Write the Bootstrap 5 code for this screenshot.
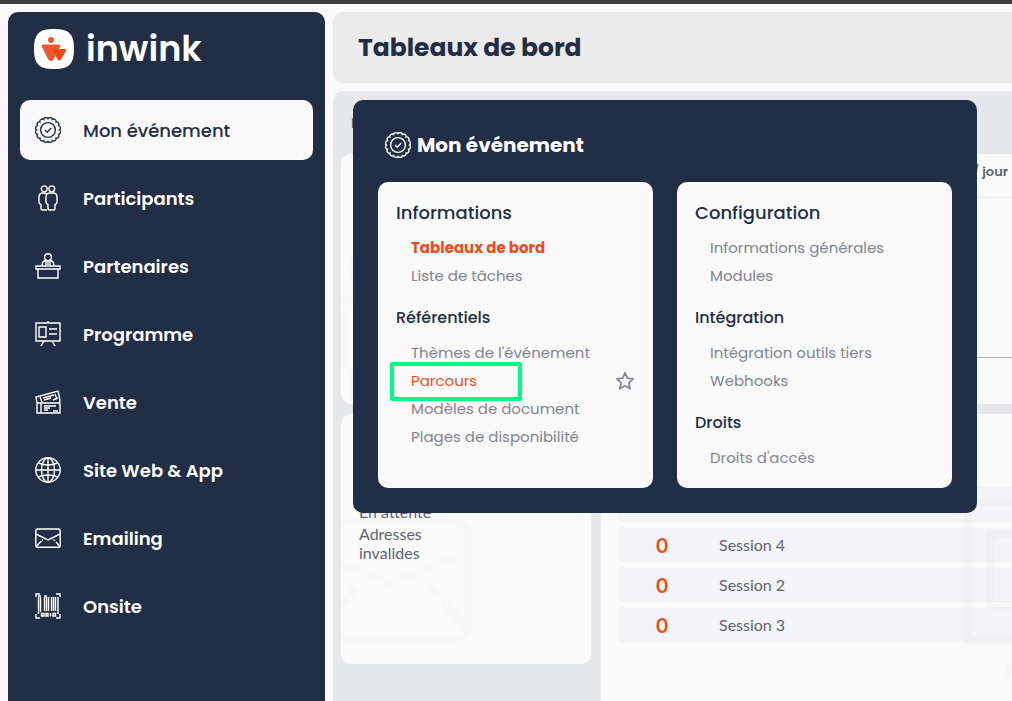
<!DOCTYPE html>
<html lang="fr">
<head>
<meta charset="utf-8">
<meta name="viewport" content="width=device-width, initial-scale=1">
<title>inwink – Tableaux de bord</title>
<link href="https://cdn.jsdelivr.net/npm/bootstrap@5.3.0/dist/css/bootstrap.min.css" rel="stylesheet">
<style>
:root { --navy: #222e45; --paper: #fafafa; --orange: #e94e1f; --mist: #e6e7eb; --radius: 10px; }
body { background: var(--paper); color: #5f6470; font-family: Lato, "Open Sans", sans-serif; font-size: 16px; }
.app { border-top: 4px solid #3d3c3c; }
.sidebar { flex: 0 0 317px; background: var(--navy); border-radius: var(--radius) var(--radius) 0 0; font-family: Poppins, Inter, sans-serif; }
.brand { height: 74px; padding: 0 26px; gap: 12px; color: #fff; font-size: 35px; font-weight: 600; line-height: 40px; }
.side-nav { padding: 14px 12px; gap: 8px; }
.side-nav .nav-link { height: 60px; padding: 0 15px; gap: 22px; color: #fff; font-size: 18px; font-weight: 600; border-radius: var(--radius); }
.side-nav .nav-link.active { background: var(--paper); color: var(--navy); font-weight: 500; }
.line-icon { width: 26px; height: 26px; flex: none; fill: none; stroke: currentColor; stroke-width: 1.4; }
.page-head { height: 71px; padding: 0 25px; background: #ebebeb; border-radius: var(--radius) 0 0 var(--radius); }
.page-head h1 { font: 700 25px/32px Poppins, Inter, sans-serif; color: var(--navy); }
.content { min-width: 0; }
.board { background: var(--mist); border-radius: var(--radius) 0 0 0; padding-left: 8px; }
.board-title { height: 63px; padding: 20px 10px; font: 600 14px/24px Poppins, Inter, sans-serif; }
.tiles { display: grid; grid-template-columns: 250px 1fr; grid-template-rows: 250px 1fr; gap: 10px; }
.tile { background: var(--paper); border-radius: var(--radius); position: relative; overflow: hidden; }
.tile-wide { border-radius: 0; }
.tile-tall { height: 250px; }
.watermark { position: absolute; fill: none; stroke: #f7f7f7; stroke-width: 7; }
.wm-person { left: 0; top: 90px; }
.wm-mail { left: -30px; top: 105px; }
.wm-screen { right: 0; top: 85px; stroke: #1e2840; stroke-opacity: .02; stroke-width: 8; }
.chart-title { height: 44px; padding: 6px 4px; border-bottom: 1px solid #ebebed; font: 600 13px/24px Poppins, Inter, sans-serif; }
.chart-area { height: 160px; border-bottom: 1px solid #adadad; }
.stats { padding: 88px 18px 0; line-height: 19px; max-width: 130px; position: relative; }
.stats dt { font-weight: 400; margin-bottom: 3px; }
.sessions { border-collapse: separate; border-spacing: 0 5px; margin: 68px 0 0 18px; width: calc(100% - 18px); }
.sessions td { height: 35px; padding: 0; background: #f4f4f7; line-height: 20px; vertical-align: middle; }
.sessions .count { width: 86px; text-align: center; color: var(--orange); font-size: 21px; font-weight: 700; }
.sessions .label { padding-left: 14px; }
.mega { position: absolute; left: 353px; top: 100px; width: 624px; padding: 25px; background: var(--navy); border-radius: var(--radius); font-family: Poppins, Inter, sans-serif; z-index: 10; }
.mega-title { height: 57px; padding: 7px 7px 0; gap: 6px; color: #fff; }
.mega-title h2 { font-size: 20px; line-height: 26px; font-weight: 700; }
.mega-cols { display: grid; grid-template-columns: 1fr 1fr; gap: 24px; }
.panel { background: var(--paper); border-radius: var(--radius); padding: 17px 18px 16px; }
.panel h3 { font-size: 16px; line-height: 28px; font-weight: 500; color: var(--navy); margin: 14px 0 7px; }
.panel h3:first-child { font-size: 18px; margin-top: 0; }
.panel li { padding-left: 15px; line-height: 28px; font-size: 15px; position: relative; }
.panel a { color: #80848f; text-decoration: none; }
.panel a.current { color: var(--orange); font-weight: 700; }
.panel a.hovered { color: var(--orange); }
.star { color: #868a95; line-height: 1; }
.marker { position: absolute; left: -6px; top: -5px; width: 132px; height: 39px; border: 4px solid #00fb84; border-radius: 2px; pointer-events: none; }
</style>
</head>
<body>
<div class="app d-flex vh-100 overflow-hidden position-relative ps-2 pt-2 gap-2">
  <aside class="sidebar">
    <div class="brand d-flex align-items-center">
      <svg width="40" height="40" viewBox="0 0 40 40" aria-hidden="true"><path fill="#fff" d="M20 0C35 0 40 5 40 20S35 40 20 40 0 35 0 20 5 0 20 0Z"/><circle cx="17" cy="11" r="3" fill="#ea5a32"/><path fill="#ea5a32" d="M9.500 15.500h15q2.500 0 1.500 2.500l-6 12q-1 2-3 2t-3-2L8 18q-1-2.500 1.500-2.500Z"/><path fill="#ea4b1c" d="M20.500 20h10q2.500 0 1.500 2l-5 8.500q-1.500 2-3.500 0l-4.500-8.500q-1-2 1-2Z"/></svg>
      <span>inwink</span>
    </div>
    <nav class="side-nav nav flex-column flex-nowrap">
      <a class="nav-link active d-flex align-items-center" href="#"><svg class="line-icon" viewBox="0 0 26 26"><use href="#seal"/></svg>Mon événement</a>
      <a class="nav-link d-flex align-items-center" href="#"><svg class="line-icon" viewBox="0 0 26 26"><circle cx="9.200" cy="3.800" r="2.900"/><circle cx="16.800" cy="3.800" r="2.900"/><path d="M12 8.800q-1.500-.8-4-.8-4 0-4 4v5q0 2 2 2.500v4q0 1.500 2 1.500h4M18 8h-3q-4 0-4 4v5q0 2 2 2.500v4q0 1.500 2 1.500h3q2 0 2-1.500v-4q2-.5 2-2.500v-5q0-4-4-4Z"/></svg>Participants</a>
      <a class="nav-link d-flex align-items-center" href="#"><svg class="line-icon" viewBox="0 0 26 26"><circle cx="13" cy="4.200" r="3.400"/><path d="M7 13q0-5 4-5.500M19 13q0-5-4-5.500M11 7.500v5M15 7.500v5M13 8v4M1 13h24v3H1ZM3 16v9h20v-9"/></svg>Partenaires</a>
      <a class="nav-link d-flex align-items-center" href="#"><svg class="line-icon" viewBox="0 0 26 26"><path d="M1 2h24v18H1ZM4 6h7v10H4ZM14 8h8M14 13h8M13 0v2M9 20l-3 5M17 20l3 5"/></svg>Programme</a>
      <a class="nav-link d-flex align-items-center" href="#"><svg class="line-icon" viewBox="0 0 26 26"><path d="M2 14h23v10H2ZM6 14v10M9 17h12M9 19h6M9 21h4M18 22h5M2 14L1 8l22-6 1 4 1 6-1 2M5 8l2 5M8 9l11-3M9 11l7-2M18 11l5-2M20 5l2 5"/></svg>Vente</a>
      <a class="nav-link d-flex align-items-center" href="#"><svg class="line-icon" viewBox="0 0 26 26"><circle cx="13" cy="13" r="12.200"/><ellipse cx="13" cy="13" rx="6.500" ry="12.200"/><path d="M13 1v24M1 13h24M3.500 6q9.500 4 19 0M3.500 20q9.500-4 19 0"/></svg>Site Web &amp; App</a>
      <a class="nav-link d-flex align-items-center" href="#"><svg class="line-icon" viewBox="0 0 26 26"><rect x=".8" y="4" width="24.400" height="18.200" rx="1.800"/><path d="M1 9l12 6 12-6M1.500 21l5-5M7 15.500l1-1M24.500 21l-3.500-4M20 16l-1.500-1.500"/></svg>Emailing</a>
      <a class="nav-link d-flex align-items-center" href="#"><svg class="line-icon" viewBox="0 0 26 26"><path d="M5 1H1v3M21 1h4v3M1 21v4h4M25 21v4h-4M3.500 4v17M5.500 4v15M9.500 4v14M11.500 4v14M13.500 4v14M16.500 4v14M18.500 4v14M20.500 4v14M23 4v17M3 3h3M9 3h3M6.500 20.500h2.500v2.500H6.500ZM11 20.500h2v2.500h-2ZM15.500 20v3.500M18 20.500h2.500v2.500H18Z"/></svg>Onsite</a>
    </nav>
  </aside>

  <main class="content flex-grow-1 d-flex flex-column gap-2">
    <header class="page-head d-flex align-items-center"><h1 class="m-0">Tableaux de bord</h1></header>
    <section class="board flex-grow-1 d-flex flex-column">
      <div class="board-title">I</div>
      <div class="tiles flex-grow-1">
        <div class="tile">
          <svg class="watermark wm-person" width="60" height="160" viewBox="0 0 60 160" aria-hidden="true"><circle cx="32" cy="25" r="21"/><path d="M-2 60Q8 53 20 53M4 68V114Q4 122 12 130V160"/></svg>
        </div>
        <div class="tile tile-wide">
          <div class="chart-title text-end">/ jour</div>
          <div class="chart-area"></div>
        </div>
        <div class="tile tile-tall">
          <svg class="watermark wm-mail" width="162" height="124" viewBox="0 0 162 124" aria-hidden="true"><rect x="4" y="4" width="153" height="115" rx="11"/><path d="M4 35L80 64 157 33M10 110L42 72M120 70l6 6M133 85l22 22" stroke-linecap="round"/></svg>
          <dl class="stats m-0"><dt>En attente</dt><dt>Adresses invalides</dt></dl>
        </div>
        <div class="tile tile-wide">
          <table class="sessions">
            <tr><td class="count"></td><td class="label"></td></tr>
            <tr><td class="count">0</td><td class="label">Session 4</td></tr>
            <tr><td class="count">0</td><td class="label">Session 2</td></tr>
            <tr><td class="count">0</td><td class="label">Session 3</td></tr>
          </table>
          <svg class="watermark wm-screen" width="49" height="190" viewBox="0 0 49 190" aria-hidden="true"><path d="M49 3H5V142H49M49 35H28V106H49M49 165L42 180"/></svg>
        </div>
      </div>
    </section>
  </main>
</div>

<div class="mega">
  <div class="mega-title d-flex align-items-start">
    <svg class="line-icon" viewBox="0 0 26 26" aria-hidden="true"><g id="seal"><path d="M24.400 13A2.400 2.400 0 0 1 23.530 17.360A2.400 2.400 0 0 1 21.060 21.060A2.400 2.400 0 0 1 17.360 23.530A2.400 2.400 0 0 1 13 24.400A2.400 2.400 0 0 1 8.640 23.530A2.400 2.400 0 0 1 4.940 21.060A2.400 2.400 0 0 1 2.470 17.360A2.400 2.400 0 0 1 1.600 13A2.400 2.400 0 0 1 2.470 8.640A2.400 2.400 0 0 1 4.940 4.940A2.400 2.400 0 0 1 8.640 2.470A2.400 2.400 0 0 1 13 1.600A2.400 2.400 0 0 1 17.360 2.470A2.400 2.400 0 0 1 21.060 4.940A2.400 2.400 0 0 1 23.530 8.640A2.400 2.400 0 0 1 24.400 13Z"/><circle cx="13" cy="13" r="7.400"/><path d="M10 13l2.200 2.200 4-4.200"/></g></svg>
    <h2 class="m-0">Mon événement</h2>
  </div>
  <div class="mega-cols">
    <section class="panel">
      <h3>Informations</h3>
      <ul class="list-unstyled m-0">
        <li><a class="current" href="#">Tableaux de bord</a></li>
        <li><a href="#">Liste de tâches</a></li>
      </ul>
      <h3>Référentiels</h3>
      <ul class="list-unstyled m-0">
        <li><a href="#">Thèmes de l'événement</a></li>
        <li class="d-flex justify-content-between align-items-center"><a class="hovered" href="#">Parcours</a>
          <button class="star btn p-0 border-0" type="button" aria-label="Ajouter aux favoris"><svg width="20" height="20" viewBox="0 0 20 20" fill="none" stroke="currentColor" stroke-width="1.800" stroke-linejoin="round"><path d="M10 1.800l2.400 5.400 5.800.6-4.300 4 1.200 5.800L10 14.800l-5.100 2.800 1.200-5.800-4.300-4 5.800-.6Z"/></svg></button>
          <span class="marker"></span></li>
        <li><a href="#">Modèles de document</a></li>
        <li><a href="#">Plages de disponibilité</a></li>
      </ul>
    </section>
    <section class="panel">
      <h3>Configuration</h3>
      <ul class="list-unstyled m-0">
        <li><a href="#">Informations générales</a></li>
        <li><a href="#">Modules</a></li>
      </ul>
      <h3>Intégration</h3>
      <ul class="list-unstyled m-0">
        <li><a href="#">Intégration outils tiers</a></li>
        <li><a href="#">Webhooks</a></li>
      </ul>
      <h3>Droits</h3>
      <ul class="list-unstyled m-0">
        <li><a href="#">Droits d'accès</a></li>
      </ul>
    </section>
  </div>
</div>
<script src="https://cdn.jsdelivr.net/npm/bootstrap@5.3.0/dist/js/bootstrap.bundle.min.js"></script>
</body>
</html>
